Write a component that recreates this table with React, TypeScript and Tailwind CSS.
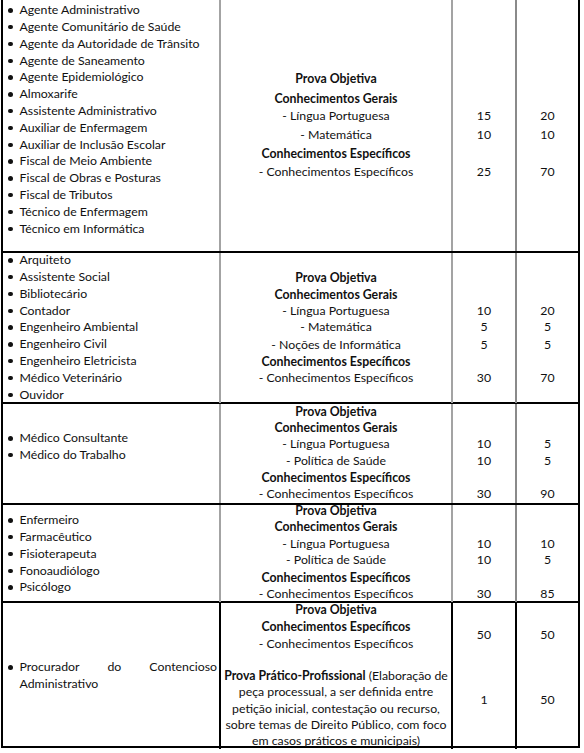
type Line = {
  text: string;
  bold?: boolean;
  n1?: string;
  n2?: string;
  gap: string;
};

type Block = {
  jobs: string[];
  jobsPad: string;
  lines: Line[];
  linesPad: string;
  height: string;
};

const blocks: Block[] = [
  {
    jobs: [
      'Agente Administrativo',
      'Agente Comunitário de Saúde',
      'Agente da Autoridade de Trânsito',
      'Agente de Saneamento',
      'Agente Epidemiológico',
      'Almoxarife',
      'Assistente Administrativo',
      'Auxiliar de Enfermagem',
      'Auxiliar de Inclusão Escolar',
      'Fiscal de Meio Ambiente',
      'Fiscal de Obras e Posturas',
      'Fiscal de Tributos',
      'Técnico de Enfermagem',
      'Técnico em Informática',
    ],
    jobsPad: 'pt-[2px]',
    linesPad: 'pt-[71px]',
    height: 'h-[253px]',
    lines: [
      { text: 'Prova Objetiva', bold: true, gap: 'mt-0' },
      { text: 'Conhecimentos Gerais', bold: true, gap: 'mt-[4px]' },
      { text: '- Língua Portuguesa', n1: '15', n2: '20', gap: 'mt-[1px]' },
      { text: '- Matemática', n1: '10', n2: '10', gap: 'mt-[3px]' },
      { text: 'Conhecimentos Específicos', bold: true, gap: 'mt-[3px]' },
      { text: '- Conhecimentos Específicos', n1: '25', n2: '70', gap: 'mt-[2px]' },
    ],
  },
  {
    jobs: [
      'Arquiteto',
      'Assistente Social',
      'Bibliotecário',
      'Contador',
      'Engenheiro Ambiental',
      'Engenheiro Civil',
      'Engenheiro Eletricista',
      'Médico Veterinário',
      'Ouvidor',
    ],
    jobsPad: '-mt-[1px]',
    linesPad: 'pt-[17px]',
    height: 'h-[151px]',
    lines: [
      { text: 'Prova Objetiva', bold: true, gap: 'mt-0' },
      { text: 'Conhecimentos Gerais', bold: true, gap: 'mt-[1px]' },
      { text: '- Língua Portuguesa', n1: '10', n2: '20', gap: 'mt-0' },
      { text: '- Matemática', n1: '5', n2: '5', gap: 'mt-0' },
      { text: '- Noções de Informática', n1: '5', n2: '5', gap: 'mt-[2px]' },
      { text: 'Conhecimentos Específicos', bold: true, gap: 'mt-[1px]' },
      { text: '- Conhecimentos Específicos', n1: '30', n2: '70', gap: 'mt-0' },
    ],
  },
  {
    jobs: ['Médico Consultante', 'Médico do Trabalho'],
    jobsPad: 'pt-[26px]',
    linesPad: 'pt-0',
    height: 'h-[101px]',
    lines: [
      { text: 'Prova Objetiva', bold: true, gap: 'mt-0' },
      { text: 'Conhecimentos Gerais', bold: true, gap: 'mt-0' },
      { text: '- Língua Portuguesa', n1: '10', n2: '5', gap: 'mt-0' },
      { text: '- Política de Saúde', n1: '10', n2: '5', gap: 'mt-[1px]' },
      { text: 'Conhecimentos Específicos', bold: true, gap: 'mt-[1px]' },
      { text: '- Conhecimentos Específicos', n1: '30', n2: '90', gap: 'mt-0' },
    ],
  },
  {
    jobs: ['Enfermeiro', 'Farmacêutico', 'Fisioterapeuta', 'Fonoaudiólogo', 'Psicólogo'],
    jobsPad: 'pt-[7px]',
    linesPad: 'pt-0',
    height: 'h-[98px]',
    lines: [
      { text: 'Prova Objetiva', bold: true, gap: '-mt-[2px]' },
      { text: 'Conhecimentos Gerais', bold: true, gap: 'mt-0' },
      { text: '- Língua Portuguesa', n1: '10', n2: '10', gap: 'mt-[1px]' },
      { text: '- Política de Saúde', n1: '10', n2: '5', gap: 'mt-0' },
      { text: 'Conhecimentos Específicos', bold: true, gap: 'mt-[2px]' },
      { text: '- Conhecimentos Específicos', n1: '30', n2: '85', gap: 'mt-0' },
    ],
  },
];

function JobList({ jobs, pad }: { jobs: string[]; pad: string }) {
  return (
    <ul className={`flex flex-col ${pad}`}>
      {jobs.map((job) => (
        <li key={job} className="flex h-[16.8px] items-center whitespace-nowrap">
          <span className="ml-[5px] mr-[7px] h-[4.5px] w-[4.5px] shrink-0 rounded-full bg-[#111]" />
          {job}
        </li>
      ))}
    </ul>
  );
}

function ExamRow({ block }: { block: Block }) {
  return (
    <div className={`grid grid-cols-[216px_232px_64px_63px] border-b-2 border-black ${block.height}`}>
      <div>
        <JobList jobs={block.jobs} pad={block.jobsPad} />
      </div>
      <div className={`flex flex-col items-center border-l-2 border-[#a3a3a3] ${block.linesPad}`}>
        {block.lines.map((line) => (
          <div
            key={line.text + line.gap}
            className={`h-[16px] leading-[16px] whitespace-nowrap ${line.gap} ${line.bold ? 'font-bold' : ''}`}
          >
            {line.text}
          </div>
        ))}
      </div>
      <div className={`flex flex-col items-center border-l-2 border-[#a3a3a3] ${block.linesPad}`}>
        {block.lines.map((line) => (
          <div key={line.text + line.gap} className={`h-[16px] leading-[16px] ${line.gap}`}>
            {line.n1 ?? ''}
          </div>
        ))}
      </div>
      <div className={`flex flex-col items-center border-l-2 border-[#8a8a8a] ${block.linesPad}`}>
        {block.lines.map((line) => (
          <div key={line.text + line.gap} className={`h-[16px] leading-[16px] ${line.gap}`}>
            {line.n2 ?? ''}
          </div>
        ))}
      </div>
    </div>
  );
}

function ProcuradorRow() {
  return (
    <div className="grid h-[145px] grid-cols-[216px_232px_64px_63px] border-b-2 border-black">
      <div className="pt-[56px]">
        <div className="flex h-[16.8px] items-center">
          <span className="ml-[5px] mr-[7px] h-[4.5px] w-[4.5px] shrink-0 rounded-full bg-[#111]" />
          <div className="flex flex-1 justify-between pr-[2px]">
            <span>Procurador</span>
            <span>do</span>
            <span>Contencioso</span>
          </div>
        </div>
        <div className="flex h-[16.8px] items-center pl-[16.5px]">Administrativo</div>
      </div>
      <div className="flex flex-col items-center border-l-2 border-black text-center">
        <div className="-mt-[1px] h-[16px] leading-[16px] font-bold">Prova Objetiva</div>
        <div className="mt-[1px] h-[16px] leading-[16px] font-bold">Conhecimentos Específicos</div>
        <div className="mt-[1px] h-[16px] leading-[16px]">- Conhecimentos Específicos</div>
        <div className="mt-[16px] leading-[16.3px] whitespace-nowrap">
          <span className="font-bold">Prova Prático-Profissional</span> (Elaboração de
          <br />
          peça processual, a ser definida entre
          <br />
          petição inicial, contestação ou recurso,
          <br />
          sobre temas de Direito Público, com foco
          <br />
          em casos práticos e municipais)
        </div>
      </div>
      <div className="flex flex-col items-center border-l-2 border-black">
        <div className="mt-[24px] h-[16px] leading-[16px]">50</div>
        <div className="mt-[49px] h-[16px] leading-[16px]">1</div>
      </div>
      <div className="flex flex-col items-center border-l-2 border-black">
        <div className="mt-[24px] h-[16px] leading-[16px]">50</div>
        <div className="mt-[49px] h-[16px] leading-[16px]">50</div>
      </div>
    </div>
  );
}

export default function App() {
  return (
    <div className="min-h-[753px] w-[584px] bg-white font-['Lato',sans-serif] text-[12.3px] text-[#111]">
      <div className="ml-[1px] w-[579px] border-x-2 border-black">
        {blocks.map((block) => (
          <ExamRow key={block.jobs[0]} block={block} />
        ))}
        <ProcuradorRow />
      </div>
    </div>
  );
}
